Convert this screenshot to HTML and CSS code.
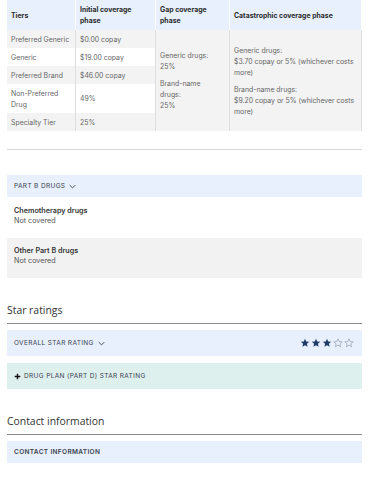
FILE: index.html
```html
<!DOCTYPE html>
<html lang="en">

<head>
  <meta charset="UTF-8">
  <meta name="viewport" content="width=device-width, initial-scale=1.0">
  <link rel="stylesheet" href="styles.css">
  <title>Plan details</title>
</head>

<body>

  <table class="cost-table">
    <thead>
      <tr>
        <th class="col-tier">Tiers</th>
        <th class="col-initial">Initial coverage phase</th>
        <th class="col-gap">Gap coverage phase</th>
        <th class="col-cat">Catastrophic coverage phase</th>
      </tr>
    </thead>
    <tbody>
      <tr class="shade">
        <td>Preferred Generic</td>
        <td>$0.00 copay</td>
        <td rowspan="5" class="span-cell">
          <p>Generic drugs:<br>25%</p>
          <p>Brand-name<br>drugs:<br>25%</p>
        </td>
        <td rowspan="5" class="span-cell">
          <p>Generic drugs:<br>$3.70 copay or 5% (whichever costs more)</p>
          <p>Brand-name drugs:<br>$9.20 copay or 5% (whichever costs more)</p>
        </td>
      </tr>
      <tr>
        <td>Generic</td>
        <td>$19.00 copay</td>
      </tr>
      <tr class="shade">
        <td>Preferred Brand</td>
        <td>$46.00 copay</td>
      </tr>
      <tr class="tall">
        <td>Non-Preferred Drug</td>
        <td>49%</td>
      </tr>
      <tr class="shade">
        <td>Specialty Tier</td>
        <td>25%</td>
      </tr>
    </tbody>
  </table>

  <hr class="divider">

  <div class="panel">
    <div class="panel-head">PART B DRUGS
      <svg class="chevron" viewBox="0 0 10 6"><path d="M1 1l4 4 4-4" /></svg>
    </div>
    <div class="item">
      <div class="item-title">Chemotherapy drugs</div>
      <div class="item-text">Not covered</div>
    </div>
    <div class="item shade">
      <div class="item-title">Other Part B drugs</div>
      <div class="item-text">Not covered</div>
    </div>
  </div>

  <h2 class="section-title">Star ratings</h2>
  <div class="panel-head rating-head">
    <span>OVERALL STAR RATING
      <svg class="chevron" viewBox="0 0 10 6"><path d="M1 1l4 4 4-4" /></svg>
    </span>
    <span class="stars">
      <svg viewBox="0 0 24 24" class="star full"><path d="M12 2l2.9 6.6 7.1.6-5.4 4.7 1.6 7-6.2-3.7-6.2 3.7 1.6-7L2 9.2l7.1-.6z" /></svg>
      <svg viewBox="0 0 24 24" class="star full"><path d="M12 2l2.9 6.6 7.1.6-5.4 4.7 1.6 7-6.2-3.7-6.2 3.7 1.6-7L2 9.2l7.1-.6z" /></svg>
      <svg viewBox="0 0 24 24" class="star full"><path d="M12 2l2.9 6.6 7.1.6-5.4 4.7 1.6 7-6.2-3.7-6.2 3.7 1.6-7L2 9.2l7.1-.6z" /></svg>
      <svg viewBox="0 0 24 24" class="star empty"><path d="M12 2l2.9 6.6 7.1.6-5.4 4.7 1.6 7-6.2-3.7-6.2 3.7 1.6-7L2 9.2l7.1-.6z" /></svg>
      <svg viewBox="0 0 24 24" class="star empty"><path d="M12 2l2.9 6.6 7.1.6-5.4 4.7 1.6 7-6.2-3.7-6.2 3.7 1.6-7L2 9.2l7.1-.6z" /></svg>
    </span>
  </div>
  <div class="panel-head plan-head">
    <svg class="plus" viewBox="0 0 10 10"><path d="M5 1v8M1 5h8" /></svg>
    DRUG PLAN (PART D) STAR RATING
  </div>

  <h2 class="section-title">Contact information</h2>
  <div class="panel-head contact-head">CONTACT INFORMATION</div>

</body>

</html>
```

FILE: styles.css
```css
body {
  margin: 0;
  padding: 0 8px 0 7px;
  font-family: Inter, 'Noto Sans', sans-serif;
  color: #333;
  background-color: #fff;
}

.cost-table {
  width: 100%;
  table-layout: fixed;
  border-collapse: collapse;
  font-size: 6.9px;
  line-height: 11px;
}

.cost-table th {
  background-color: #e7f0fc;
  text-align: left;
  font-weight: 700;
  color: #2b2b2b;
  height: 30px;
  padding: 0 2px 0 4px;
  border-right: 1px solid #fff;
}

.cost-table td {
  color: #666;
  height: 18px;
  padding: 0 2px 0 4px;
  border-right: 1px solid #dedede;
  vertical-align: middle;
}

.cost-table tr.tall td {
  height: 29px;
}

.col-tier {
  width: 62px;
}

.col-initial {
  width: 73px;
}

.col-gap {
  width: 67px;
}

.cost-table tr.shade td {
  background-color: #f3f3f3;
}

.cost-table td.span-cell {
  background-color: #f3f3f3;
  border-left: 1px solid #dedede;
}

.span-cell p {
  margin: 6px 0;
}

.divider {
  border: none;
  border-top: 1px solid #d8d8d8;
  margin: 18px 0 25px;
}

.panel-head {
  background-color: #e7f0fc;
  font-size: 6.5px;
  letter-spacing: 0.35px;
  color: #3a4250;
  height: 22px;
  display: flex;
  align-items: center;
  padding: 0 7px;
}

.chevron {
  width: 7px;
  height: 5px;
  margin-left: 4px;
  fill: none;
  stroke: #3a4250;
  stroke-width: 1.3;
}

.item {
  padding: 9px 7px;
  font-size: 7.2px;
  line-height: 10px;
}

.item.shade {
  background-color: #f2f2f2;
  margin-top: 3px;
  padding: 8px 7px 12px;
}

.item-title {
  font-weight: 600;
  color: #333;
}

.item-text {
  color: #555;
}

.section-title {
  font-family: 'Open Sans', sans-serif;
  font-weight: 400;
  font-size: 10.4px;
  line-height: 14px;
  color: #333;
  margin: 25px 0 0;
  padding-bottom: 6px;
  border-bottom: 1px solid #8c8c8c;
}

.rating-head {
  margin-top: 6px;
  height: 26px;
  justify-content: space-between;
}

.rating-head span {
  display: flex;
  align-items: center;
}

.stars {
  gap: 1px;
  margin-right: 1px;
}

.star {
  width: 10px;
  height: 10px;
}

.star.full {
  fill: #1f3c6b;
}

.star.empty {
  fill: none;
  stroke: #8a93a3;
  stroke-width: 1.5;
}

.plan-head {
  background-color: #def0ee;
  margin-top: 7px;
  height: 26px;
}

.plus {
  width: 7px;
  height: 7px;
  margin-right: 3px;
  stroke: #111;
  stroke-width: 2;
}

.contact-head {
  margin-top: 6px;
  font-weight: 600;
}
```
